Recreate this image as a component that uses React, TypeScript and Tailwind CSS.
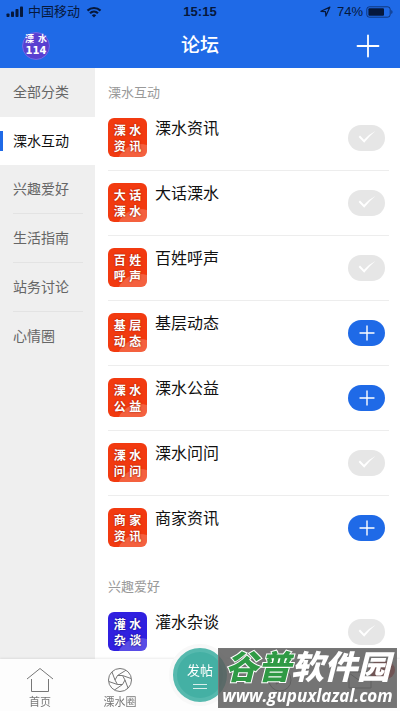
import { Plus } from "lucide-react";

const categories = ["全部分类", "溧水互动", "兴趣爱好", "生活指南", "站务讨论", "心情圈"];

const sections = [
  {
    title: "溧水互动",
    color: "bg-[#f23a10] text-shadow-[0_0_2px_#8c1500]",
    forums: [
      { name: "溧水资讯", joined: true },
      { name: "大话溧水", joined: true },
      { name: "百姓呼声", joined: true },
      { name: "基层动态", joined: false },
      { name: "溧水公益", joined: false },
      { name: "溧水问问", joined: true },
      { name: "商家资讯", joined: false },
    ],
  },
  {
    title: "兴趣爱好",
    color: "bg-[#3020e0] text-shadow-[0_0_2px_#0c0560]",
    forums: [{ name: "灌水杂谈", joined: true }],
  },
];

function StatusBar() {
  return (
    <div className="grid grid-cols-3 items-center h-[23px] px-[6px] text-[13px] leading-4 text-[#06183c]">
      <div className="flex items-center gap-1">
        <svg viewBox="0 0 18 11" className="w-[18px] h-[11px]" fill="currentColor">
          <rect x="0.5" y="7.5" width="3" height="3.5" rx="0.8" />
          <rect x="5" y="5.5" width="3" height="5.5" rx="0.8" />
          <rect x="9.5" y="3" width="3" height="8" rx="0.8" />
          <rect x="14" y="0.5" width="3" height="10.5" rx="0.8" />
        </svg>
        <span className="whitespace-nowrap">中国移动</span>
        <svg viewBox="0 0 16 12" className="w-4 h-3 ml-[2px] shrink-0" fill="none" stroke="currentColor" strokeWidth="2.2">
          <path d="M1.5 4.6a9.4 9.4 0 0 1 13 0" />
          <path d="M4 7.3a5.8 5.8 0 0 1 8 0" />
          <path d="M8 11.4 5.8 9.2a3.2 3.2 0 0 1 4.4 0z" fill="currentColor" stroke="none" />
        </svg>
      </div>
      <span className="text-center font-semibold">15:15</span>
      <div className="flex items-center justify-end">
        <svg viewBox="0 0 12 12" className="w-[11px] h-[11px] mr-[6px]" fill="none" stroke="currentColor" strokeWidth="1.3" strokeLinejoin="round">
          <path d="M1 5.8 10.8 1.2 6.4 11 6 6.2z" />
        </svg>
        <span>74%</span>
        <svg viewBox="0 0 28 12" className="w-7 h-3 ml-[3px]" fill="none">
          <rect x="0.8" y="0.8" width="23.4" height="10.4" rx="2.6" stroke="currentColor" strokeWidth="0.9" opacity="0.7" />
          <rect x="2.4" y="2.2" width="15.6" height="7.6" rx="1" fill="currentColor" />
          <path d="M25.4 4v4c1.4-.5 1.4-3.5 0-4z" fill="currentColor" opacity="0.7" />
        </svg>
      </div>
    </div>
  );
}

function Header() {
  return (
    <header className="bg-[#1f6ae7]">
      <StatusBar />
      <div className="grid grid-cols-[36px_1fr_36px] items-center h-[45px] pl-[14px] pr-[14px] text-white">
        <a
          href="#home"
          className="flex flex-col items-center justify-center justify-self-end w-7 h-7 rounded-full bg-[#5a40d0] border border-[#6f6be8]"
        >
          <span className="flex gap-1 text-[9px] leading-[11px] font-bold">
            <span>溧</span>
            <span>水</span>
          </span>
          <span className="text-[10px] leading-[12px] font-black font-['DejaVu_Sans']">114</span>
        </a>
        <h1 className="pt-[2px] text-center text-[19px] font-medium">论坛</h1>
        <button type="button" aria-label="发布">
          <Plus className="w-9 h-9" strokeWidth={1.2} />
        </button>
      </div>
    </header>
  );
}

function ForumRow({ name, joined, color }: { name: string; joined: boolean; color: string }) {
  return (
    <li className="flex h-[65px] pt-3 border-b border-[#ededed] last:border-0">
      <div
        className={`relative grid grid-cols-2 content-center justify-items-center w-[39px] h-[39px] px-1 pt-[2px] shrink-0 rounded-md overflow-hidden text-white text-[12px] leading-4 font-bold ${color}`}
      >
        <span className="absolute left-2 top-[26px] w-12 h-12 rounded-full bg-white/20" />
        {name.split("").map((char, i) => (
          <span key={i} className="relative">
            {char}
          </span>
        ))}
      </div>
      <h3 className="flex-1 ml-2 text-[16px] leading-[22px] text-[#111]">{name}</h3>
      <button
        type="button"
        aria-label={joined ? "已关注" : "关注"}
        className={`flex items-center justify-center w-[37px] h-[26px] mt-[7px] mr-1 rounded-full text-white ${joined ? "bg-[#e6e6e6]" : "bg-[#1f6ae7]"}`}
      >
        {joined ? (
          <svg viewBox="0 0 18 14" className="w-[18px] h-[14px] mb-[3px]" fill="currentColor">
            <path d="M.6 7 2 5.600 6 9.800Q10.500 4.600 17.400 1 11.500 5.800 6.200 12.800z" />
          </svg>
        ) : (
          <Plus className="w-6 h-6" strokeWidth={1.4} />
        )}
      </button>
    </li>
  );
}

function TabBar() {
  return (
    <nav className="fixed inset-x-0 bottom-0 grid grid-cols-5 h-[52px] bg-[#fdfdfd] shadow-[0_-1px_2px_rgba(0,0,0,0.08)] text-[11px] leading-[18px] text-[#777]">
      <a href="#index" className="flex flex-col items-center pt-2">
        <svg viewBox="0 0 28 26" className="w-7 h-[26px]" fill="none" stroke="currentColor" strokeWidth="1">
          <path d="M1 12 14 1.500 27 12" />
          <path d="M5.500 12v12.500h17V12" />
        </svg>
        首页
      </a>
      <a href="#circle" className="flex flex-col items-center pt-2">
        <svg viewBox="0 0 26 26" className="w-[26px] h-[26px]" fill="none" stroke="currentColor" strokeWidth="1">
          <circle cx="13" cy="13" r="11.500" />
          <path d="M10.500 8.500h5L18 13l-2.500 4.500h-5L8 13z" />
          <path d="M10.500 8.500 19 3.200M15.500 8.500 24 11.500M18 13l3 8M15.500 17.500 7.500 23M10.500 17.500 1.800 14.500M8 13 5 5" />
        </svg>
        溧水圈
      </a>
      <div className="flex justify-center">
        <button
          type="button"
          className="flex flex-col items-center shrink-0 w-[54px] h-[54px] pt-[11px] -mt-[11px] rounded-full bg-[#44b0a4] border-4 border-[#56b9ae] ring-4 ring-[#f8f8f8] text-white text-[13px] leading-4"
        >
          发帖
          <svg viewBox="0 0 16 8" className="w-4 h-2 mt-1" stroke="currentColor" strokeWidth="1" opacity="0.8">
            <path d="M1 1.500h14M1 5.500h14" />
          </svg>
        </button>
      </div>
      <a href="#discover" aria-label="发现" className="flex flex-col items-center pt-2">
        <svg viewBox="0 0 26 26" className="w-[26px] h-[26px]" fill="none" stroke="currentColor" strokeWidth="1">
          <circle cx="13" cy="13" r="11" />
          <path d="m17 9-2.500 5.500L9 17l2.500-5.500z" />
        </svg>
      </a>
      <a href="#message" aria-label="消息" className="relative flex flex-col items-center pt-2">
        <svg viewBox="0 0 26 26" className="w-[26px] h-[26px]" fill="none" stroke="currentColor" strokeWidth="1">
          <path d="M2 5h22v16H2zM2 6l11 8 11-8" />
        </svg>
        <span className="absolute right-[5px] top-[2px] w-[26px] h-[18px] rounded-full bg-[#e03030]" />
      </a>
    </nav>
  );
}

function Watermark() {
  return (
    <div className="fixed right-[3px] bottom-[3px] w-[179px] h-[60px] flex flex-col items-center justify-end bg-[#5c5c5c]/85 border border-[#777] text-white font-bold italic whitespace-nowrap">
      <p className="text-[33px] leading-[34px] font-black">
        <span className="text-[#2f9a45] [-webkit-text-stroke:2px_#fff] [paint-order:stroke_fill]">谷普</span>软件园
      </p>
      <p className="text-[17px] leading-[22px] font-['Open_Sans']">www.gupuxlazal.com</p>
    </div>
  );
}

export default function App() {
  return (
    <div className="flex flex-col min-h-screen bg-white font-['Liberation_Sans','Noto_Sans_CJK_SC',sans-serif]">
      <Header />
      <div className="flex flex-1">
        <aside className="w-[95px] shrink-0 bg-[#efefef]">
          <ul className="text-[14px]">
            {categories.map((item) =>
              item === "溧水互动" ? (
                <li key={item} className="relative h-12 bg-white text-[#111]">
                  <span className="absolute left-0 top-[14px] w-[3px] h-5 bg-[#1f6ae7]" />
                  <a href="#category" className="flex items-center h-full pl-[13px]">
                    {item}
                  </a>
                </li>
              ) : (
                <li key={item} className="group h-[49px] pl-[13px] pr-3 text-[#666]">
                  <a
                    href="#category"
                    className="flex items-center h-full pt-px border-b border-[#e3e3e3] group-first:border-transparent group-last:border-transparent"
                  >
                    {item}
                  </a>
                </li>
              ),
            )}
          </ul>
        </aside>
        <main className="flex flex-col flex-1 gap-px pl-[13px] pr-[11px]">
          {sections.map((section) => (
            <section key={section.title}>
              <h2 className="h-[38px] pt-[15px] text-[13px] leading-5 text-[#999]">{section.title}</h2>
              <ul>
                {section.forums.map((forum) => (
                  <ForumRow key={forum.name} {...forum} color={section.color} />
                ))}
              </ul>
            </section>
          ))}
        </main>
      </div>
      <TabBar />
      <Watermark />
    </div>
  );
}
